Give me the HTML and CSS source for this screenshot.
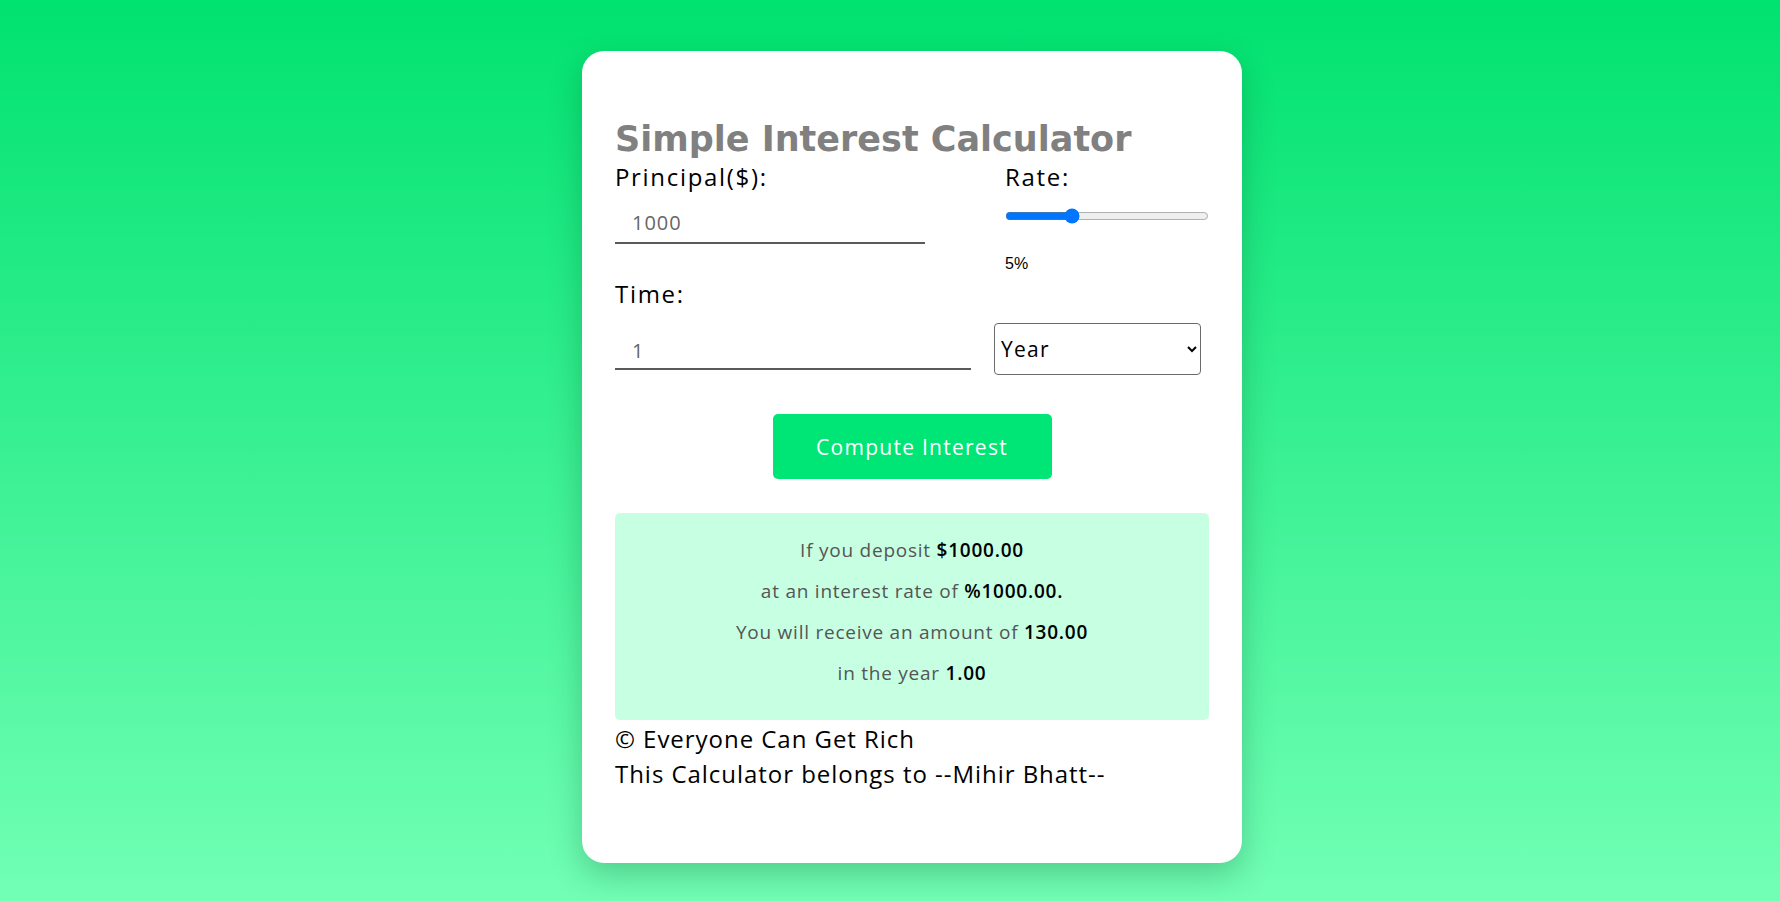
FILE: index.html
```html
<!DOCTYPE html>
<html lang="en">
<head>
<meta charset="utf-8">
<title>Simple Interest Calculator</title>
<link rel="stylesheet" href="styles.css">
</head>
<body>
<main class="card">
  <h1 class="title">Simple Interest Calculator</h1>
  <div class="row-top">
    <div class="col-principal">
      <label class="label" for="principal">Principal($):</label>
      <input class="field field-principal" id="principal" type="text" value="1000">
    </div>
    <div class="col-rate">
      <label class="label" for="rate">Rate:</label>
      <input class="slider" id="rate" type="range" min="0" max="16" value="5">
      <span class="rate-value">5%</span>
    </div>
  </div>
  <label class="label label-time" for="time">Time:</label>
  <div class="row-time">
    <input class="field field-time" id="time" type="text" value="1">
    <select class="unit">
      <option>Year</option>
      <option>Month</option>
    </select>
  </div>
  <div class="actions">
    <button class="btn" type="button">Compute Interest</button>
  </div>
  <section class="result">
    <p>If you deposit <b>$1000.00</b></p>
    <p>at an interest rate of <b>%1000.00.</b></p>
    <p>You will receive an amount of <b>130.00</b></p>
    <p>in the year <b>1.00</b></p>
  </section>
  <footer class="footer">
    <p>© Everyone Can Get Rich</p>
    <p>This Calculator belongs to --Mihir Bhatt--</p>
  </footer>
</main>
</body>
</html>
```
FILE: styles.css
```css
html, body {
  margin: 0;
  padding: 0;
}
body {
  box-sizing: border-box;
  min-height: 901px;
  padding-left: 44px;
  background: linear-gradient(to bottom, #00e270 0%, #72ffb5 100%);
  font-family: "Open Sans", "Noto Sans", sans-serif;
  letter-spacing: 0.06em;
  color: #000;
  overflow: hidden;
}
.card {
  box-sizing: border-box;
  width: 660px;
  height: 812px;
  margin: 51px auto 0;
  padding: 68px 33px 0;
  background: #fff;
  border-radius: 22px;
  box-shadow: 0 12px 32px rgba(0, 60, 30, 0.25);
}
.title {
  margin: 0;
  font-family: "DejaVu Sans", Verdana, sans-serif;
  font-weight: bold;
  font-size: 35px;
  line-height: 40px;
  letter-spacing: 0;
  color: #808080;
  white-space: nowrap;
}
.label {
  display: block;
  font-size: 24px;
  line-height: 28px;
  margin-top: 4px;
  letter-spacing: 0.07em;
}
.row-top {
  display: flex;
  align-items: flex-start;
}
.col-principal {
  width: 310px;
}
.col-rate {
  margin-left: 80px;
  width: 204px;
}
.field {
  display: block;
  box-sizing: border-box;
  height: 46px;
  padding: 4px 0 0 17px;
  border: none;
  border-bottom: 2px solid #5a5a5a;
  outline: none;
  background: transparent;
  font-family: "Open Sans", sans-serif;
  font-size: 20px;
  letter-spacing: 0.05em;
  color: #666;
}
.field-principal {
  width: 310px;
  margin-top: 7px;
}
.slider {
  display: block;
  width: 204px;
  height: 16px;
  margin: 17px 0 0;
  accent-color: #0075ff;
}
.rate-value {
  display: block;
  margin-top: 31px;
  font-family: "Liberation Sans", Arial, sans-serif;
  font-size: 16px;
  line-height: 18px;
  letter-spacing: 0;
}
.label-time {
  margin-top: 7px;
}
.row-time {
  display: flex;
  align-items: flex-start;
  gap: 23px;
  margin-top: 15px;
}
.field-time {
  width: 356px;
  margin-top: 1px;
  padding-top: 8px;
}
.unit {
  box-sizing: border-box;
  width: 207px;
  height: 52px;
  padding: 0 2px;
  border: 1px solid #6b6b6b;
  border-radius: 4px;
  background: #fff;
  font-family: "Open Sans", sans-serif;
  font-size: 21px;
  letter-spacing: 0.06em;
  color: #000;
}
.actions {
  display: flex;
  justify-content: center;
  margin-top: 39px;
}
.btn {
  width: 279px;
  height: 65px;
  border: none;
  border-radius: 5px;
  background: #00e676;
  color: #fff;
  font-family: "Open Sans", sans-serif;
  font-size: 21px;
  letter-spacing: 0.06em;
  cursor: pointer;
}
.result {
  margin-top: 34px;
  height: 207px;
  box-sizing: border-box;
  padding: 17px 20px 0;
  background: #c7ffe2;
  border-radius: 5px;
  text-align: center;
  color: #555;
  font-size: 19px;
  letter-spacing: 0.04em;
}
.result p {
  margin: 0;
  line-height: 41px;
}
.result b {
  font-weight: 600;
  color: #000;
}
.footer {
  margin-top: 1px;
  font-size: 24px;
}
.footer p {
  margin: 0;
  line-height: 35px;
}
```
